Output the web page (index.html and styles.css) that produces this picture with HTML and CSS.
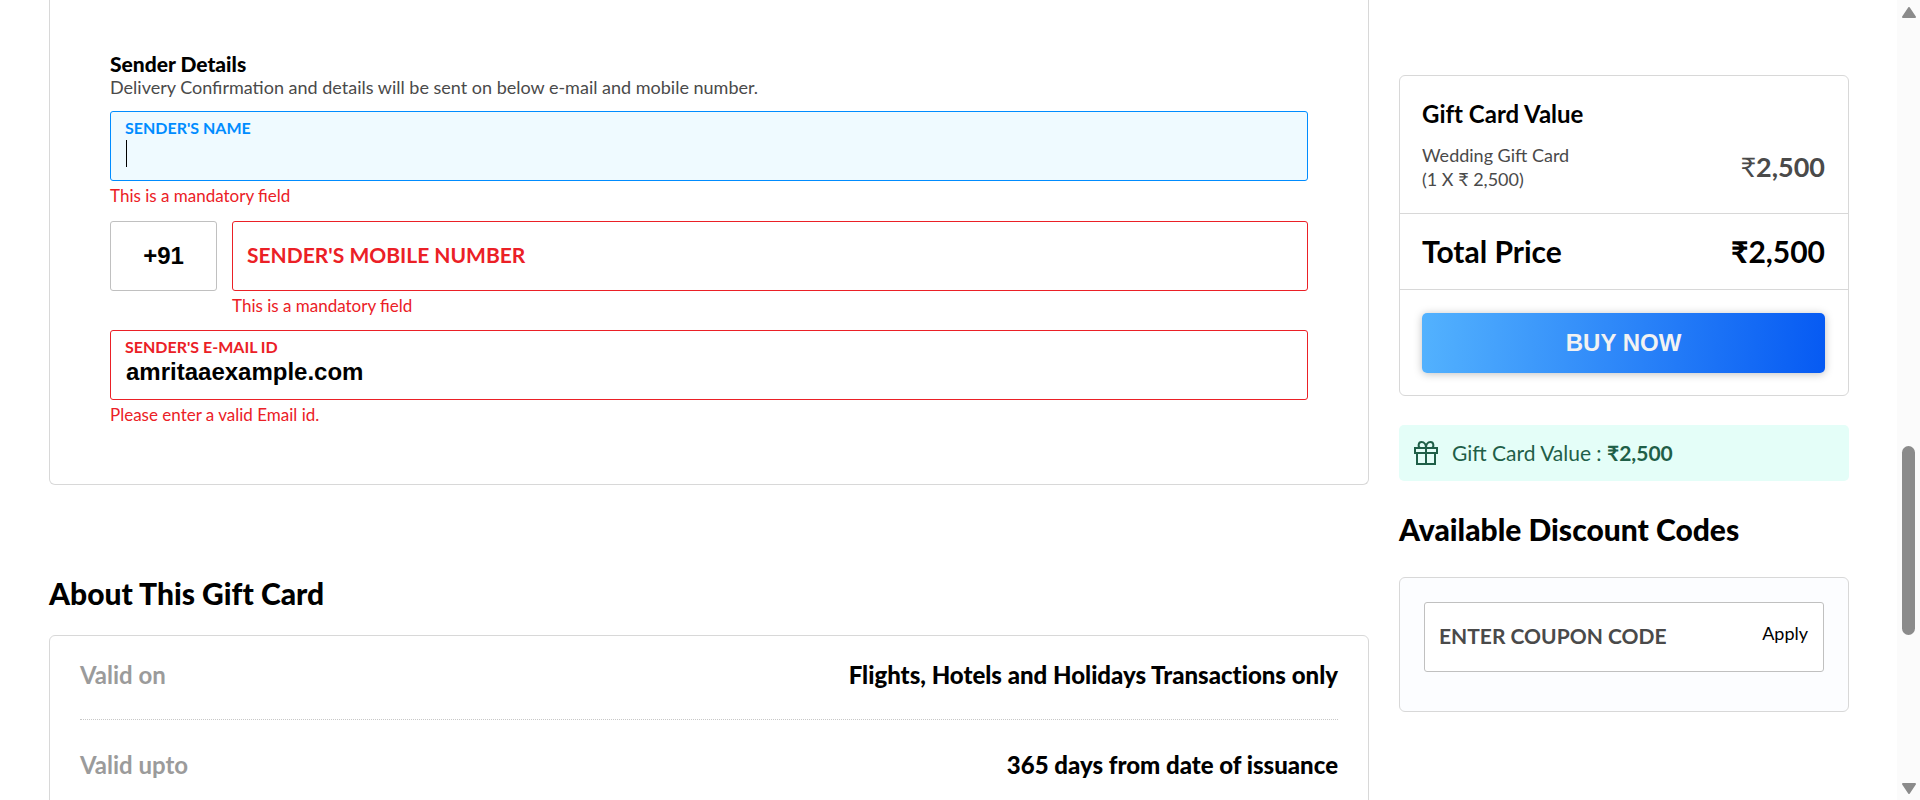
FILE: index.html
```html
<!DOCTYPE html>
<html lang="en">
<head>
<meta charset="utf-8">
<title>Gift Card</title>
<link rel="stylesheet" href="styles.css">
</head>
<body>
<div class="viewport">
  <div class="container">
    <main class="main">
      <form class="card sender" novalidate>
        <h3 class="sender-title">Sender Details</h3>
        <p class="sender-note">Delivery Confirmation and details will be sent on below e-mail and mobile number.</p>
        <div class="group">
          <div class="field field-active">
            <label class="label-small" for="name">SENDER'S NAME</label>
            <input class="input" id="name" type="text">
            <span class="caret"></span>
          </div>
          <p class="error">This is a mandatory field</p>
        </div>
        <div class="group phone">
          <input class="code" type="text" value="+91" aria-label="Country code">
          <div class="phone-main">
            <div class="field field-error">
              <label class="label-large" for="mobile">SENDER'S MOBILE NUMBER</label>
              <input class="input input-cover" id="mobile" type="tel">
            </div>
            <p class="error">This is a mandatory field</p>
          </div>
        </div>
        <div class="group">
          <div class="field field-error">
            <label class="label-small" for="email">SENDER'S E-MAIL ID</label>
            <input class="input" id="email" type="text" value="amritaaexample.com">
          </div>
          <p class="error">Please enter a valid Email id.</p>
        </div>
      </form>
      <h2 class="heading about-heading">About This Gift Card</h2>
      <dl class="card about">
        <div class="row"><dt>Valid on</dt><dd>Flights, Hotels and Holidays Transactions only</dd></div>
        <div class="row"><dt>Valid upto</dt><dd>365 days from date of issuance</dd></div>
      </dl>
    </main>
    <aside class="side">
      <section class="card summary">
        <div class="summary-value">
          <h3 class="summary-title">Gift Card Value</h3>
          <div class="line">
            <p class="item">Wedding Gift Card<br>(1 X ₹ 2,500)</p>
            <p class="item-price"><span class="thin">₹</span>2,500</p>
          </div>
        </div>
        <div class="line total"><span>Total Price</span><span><b>₹</b>2,500</span></div>
        <div class="buy-wrap"><button class="buy" type="button">BUY NOW</button></div>
      </section>
      <p class="notice">
        <svg class="gift" viewBox="0 0 24 24" width="24" height="24" fill="none" stroke="currentColor" stroke-width="2" aria-hidden="true">
          <path d="M1 7H23V12H1ZM3 12V23H21V12M12 7V23M12 7H6C4 6 4 1 7.500 1C10.500 1 12 4 12 7C12 4 13.500 1 16.500 1C20 1 20 6 18 7"/>
        </svg>
        <span>Gift Card Value : <b>₹2,500</b></span>
      </p>
      <h2 class="heading">Available Discount Codes</h2>
      <section class="card coupon">
        <div class="field coupon-field">
          <label class="label-large" for="coupon">ENTER COUPON CODE</label>
          <input class="input input-cover" id="coupon" type="text">
          <button class="apply" type="button">Apply</button>
        </div>
      </section>
    </aside>
  </div>
  <div class="scrollbar" aria-hidden="true">
    <svg width="14" height="11" viewBox="0 0 14 11"><path d="M7 1L13 10H1Z" fill="#8b8b8b" stroke="#8b8b8b" stroke-width="2" stroke-linejoin="round"/></svg>
    <div class="track"><div class="thumb"></div></div>
    <svg width="14" height="11" viewBox="0 0 14 11"><path d="M7 10L13 1H1Z" fill="#8b8b8b" stroke="#8b8b8b" stroke-width="2" stroke-linejoin="round"/></svg>
  </div>
</div>
</body>
</html>
```
FILE: styles.css
```css
* {
  box-sizing: border-box;
}

body,
h2,
h3,
p,
dl,
dd {
  margin: 0;
}

body {
  font-family: Lato, "Liberation Sans", sans-serif;
  color: #000;
  background: #fff;
}

.viewport {
  display: flex;
  height: 100vh;
  overflow: hidden;
}

.container {
  display: grid;
  grid-template-columns: minmax(0, 1fr) 450px;
  gap: 30px;
  flex: 1;
  padding: 0 48px 0 49px;
}

.card {
  border: 1px solid #d8d8d8;
  border-radius: 6px;
}

.heading {
  font-size: 30px;
  line-height: 36px;
  font-weight: 900;
  font-variant-ligatures: none;
}

/* Sender form */

.sender {
  padding: 52px 60px 44px;
  border-top: 0;
  border-radius: 0 0 6px 6px;
}

.sender-title {
  font-size: 21px;
  line-height: 24px;
  font-weight: 900;
}

.sender-note {
  margin-bottom: 12px;
  font-size: 18px;
  line-height: 23px;
  color: #4a4a4a;
}

.group {
  height: 110px;
}

.field {
  position: relative;
  height: 70px;
  padding: 7px 14px;
  border: 1px solid #c0c0c0;
  border-radius: 3px;
  background: #fff;
}

.field-active {
  border-color: #008cff;
  background: #effaff;
  color: #008cff;
}

.field-error {
  border-color: #eb2026;
  color: #eb2026;
}

.label-small {
  display: block;
  font-size: 16px;
  line-height: 18px;
  font-weight: 700;
}

.label-large {
  display: block;
  font-size: 21px;
  line-height: 52px;
  font-weight: 700;
}

.input {
  display: block;
  width: 100%;
  height: 32px;
  padding: 0 1px;
  border: 0;
  outline: 0;
  background: transparent;
  font: 700 24px/32px "Liberation Sans", Arial, sans-serif;
  color: #000;
}

.input-cover {
  position: absolute;
  inset: 0;
  height: 100%;
  padding: 20px 15px 0;
}

.caret {
  position: absolute;
  left: 15px;
  top: 28px;
  width: 1px;
  height: 27px;
  background: #000;
}

.error {
  padding-top: 4px;
  font-size: 17px;
  line-height: 22px;
  color: #eb2026;
}

.phone {
  display: flex;
  gap: 15px;
  height: 109px;
}

.code {
  width: 107px;
  height: 70px;
  padding: 0;
  border: 1px solid #c0c0c0;
  border-radius: 3px;
  background: #fff;
  text-align: center;
  font: 700 24px "Liberation Sans", Arial, sans-serif;
  color: #000;
}

.phone-main {
  flex: 1;
}

/* About */

.about-heading {
  margin: 90px 0 24px;
}

.about {
  padding: 0 30px 60px;
}

.row {
  display: flex;
  justify-content: space-between;
  padding: 30px 0;
  border-bottom: 1px dotted #c8c8c8;
  font-size: 24px;
  line-height: 29px;
  font-weight: 700;
  font-variant-ligatures: none;
}

.row:first-child {
  padding-top: 24px;
}

.row dt {
  color: #9b9b9b;
}

.row dd {
  font-weight: 900;
}

/* Order summary */

.side {
  padding-top: 75px;
}

.line {
  display: flex;
  align-items: center;
  justify-content: space-between;
}

.summary-value {
  padding: 23px 23px 22px 22px;
  border-bottom: 1px solid #d8d8d8;
}

.summary-title {
  margin-bottom: 14px;
  font-size: 24px;
  line-height: 30px;
  font-weight: 700;
  font-variant-ligatures: none;
}

.item {
  font-size: 18px;
  line-height: 24px;
  color: #4a4a4a;
}

.item-price {
  font-size: 27px;
  line-height: 32px;
  font-weight: 700;
  color: #4a4a4a;
}

.thin {
  font-weight: 400;
}

.total {
  padding: 19px 23px 20px 22px;
  border-bottom: 1px solid #d8d8d8;
  font-size: 30px;
  line-height: 36px;
  font-weight: 700;
}

.total b {
  font-weight: 900;
}

.buy-wrap {
  padding: 23px 23px 22px 22px;
}

.buy {
  display: block;
  width: 100%;
  height: 60px;
  border: 0;
  border-radius: 5px;
  background: linear-gradient(93deg, #53b2fe, #065af3);
  box-shadow: 0 1px 8px rgba(0, 0, 0, 0.25);
  color: #f2f2f2;
  font: 700 24px "Liberation Sans", Arial, sans-serif;
}

.notice {
  display: flex;
  align-items: center;
  gap: 14px;
  height: 56px;
  margin: 29px 0 30px;
  padding: 0 15px;
  border-radius: 5px;
  background: #e4fef8;
  color: #1f5f48;
  font-size: 21px;
  line-height: 28px;
}

.coupon {
  margin-top: 30px;
  padding: 24px 24px 39px;
  background: #fcfdff;
}

.coupon-field {
  color: #4a4a4a;
}

.apply {
  position: absolute;
  top: 18px;
  right: 15px;
  padding: 0;
  border: 0;
  background: none;
  font: 400 18px/24px Lato, sans-serif;
  color: #000;
}

/* Scrollbar */

.scrollbar {
  display: flex;
  flex-direction: column;
  align-items: center;
  width: 23px;
  padding: 7px 0 6px;
  background: #fbfbfb;
}

.track {
  display: flex;
  flex-direction: column;
  flex: 1;
  padding-top: 428px;
}

.thumb {
  width: 13px;
  height: 189px;
  border-radius: 7px;
  background: #8b8b8b;
}
```
